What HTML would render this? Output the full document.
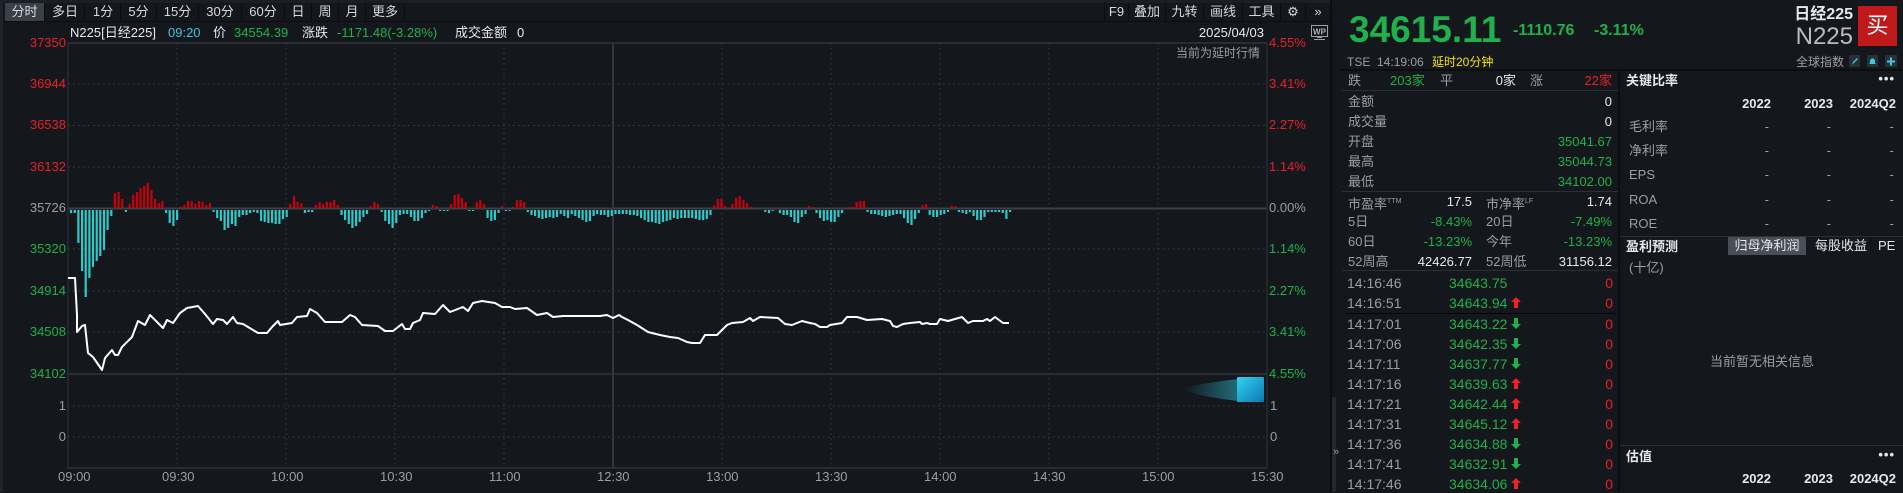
<!DOCTYPE html>
<html><head><meta charset="utf-8">
<style>
*{margin:0;padding:0;box-sizing:border-box}
body{width:1903px;height:492px;background:#14171c;overflow:hidden;position:relative;font-family:"Liberation Sans","Noto Sans CJK SC",sans-serif;color:#c8ccd2;font-size:13px}
.t{position:absolute;white-space:nowrap;line-height:16px}
.r{color:#e8202a}.g{color:#1fb14b}.gy{color:#9a9ea6}.w{color:#e6e8ec}
.tab{position:absolute;top:3px;height:18px;line-height:18px;text-align:center;color:#d6d8dc;font-size:13px;border-right:1px solid #0b0d10}
.ln{position:absolute;background:#2c2f36}
</style></head><body>
<!-- left border -->
<div class="ln" style="left:0;top:0;width:3px;height:492px;background:#202329"></div>
<!-- tab bar -->
<div class="ln" style="left:3px;top:21px;width:1327px;height:1px;background:#0b0d10"></div>
<div class="ln" style="left:3px;top:0;width:1327px;height:3px;background:#1b1e23"></div>
<div class="tab" style="left:5px;width:40px;background:#3b3f47">分时</div>
<div class="tab" style="left:46px;width:39px">多日</div>
<div class="tab" style="left:86px;width:35px">1分</div>
<div class="tab" style="left:121px;width:36px">5分</div>
<div class="tab" style="left:157px;width:42px">15分</div>
<div class="tab" style="left:199px;width:43px">30分</div>
<div class="tab" style="left:242px;width:43px">60分</div>
<div class="tab" style="left:285px;width:27px">日</div>
<div class="tab" style="left:312px;width:27px">周</div>
<div class="tab" style="left:339px;width:27px">月</div>
<div class="tab" style="left:366px;width:39px">更多</div>
<div class="tab" style="left:1104px;width:25px;border-left:1px solid #0b0d10">F9</div>
<div class="tab" style="left:1129px;width:37px">叠加</div>
<div class="tab" style="left:1166px;width:38px">九转</div>
<div class="tab" style="left:1204px;width:39px">画线</div>
<div class="tab" style="left:1243px;width:38px">工具</div>
<div class="tab" style="left:1281px;width:25px">⚙</div>
<div class="tab" style="left:1306px;width:24px;border-right:none">»</div>
<!-- info line -->
<div class="t w" style="left:70px;top:25px">N225[日经225]</div>
<div class="t" style="left:168px;top:25px;color:#3cc8d8">09:20</div>
<div class="t w" style="left:213px;top:25px">价</div>
<div class="t g" style="left:234px;top:25px">34554.39</div>
<div class="t w" style="left:302px;top:25px">涨跌</div>
<div class="t g" style="left:337px;top:25px">-1171.48(-3.28%)</div>
<div class="t w" style="left:455px;top:25px">成交金额</div>
<div class="t w" style="left:517px;top:25px">0</div>
<div class="t w" style="right:639px;top:25px">2025/04/03</div>
<div class="t gy" style="right:643px;top:45px;font-size:12px">当前为延时行情</div>
<!-- chart -->
<svg id="ch" style="position:absolute;left:0;top:0" width="1335" height="492"></svg>
<!-- left axis -->
<div class="t r" style="right:1837px;top:35px">37350</div>
<div class="t r" style="right:1837px;top:76px">36944</div>
<div class="t r" style="right:1837px;top:117px">36538</div>
<div class="t r" style="right:1837px;top:159px">36132</div>
<div class="t gy" style="right:1837px;top:200px">35726</div>
<div class="t g" style="right:1837px;top:241px">35320</div>
<div class="t g" style="right:1837px;top:283px">34914</div>
<div class="t g" style="right:1837px;top:324px">34508</div>
<div class="t g" style="right:1837px;top:366px">34102</div>
<div class="t gy" style="right:1837px;top:398px">1</div>
<div class="t gy" style="right:1837px;top:429px">0</div>
<!-- right axis -->
<div class="t r" style="left:1269px;top:35px">4.55%</div>
<div class="t r" style="left:1269px;top:76px">3.41%</div>
<div class="t r" style="left:1269px;top:117px">2.27%</div>
<div class="t r" style="left:1269px;top:159px">1.14%</div>
<div class="t gy" style="left:1269px;top:200px">0.00%</div>
<div class="t g" style="left:1269px;top:241px">1.14%</div>
<div class="t g" style="left:1269px;top:283px">2.27%</div>
<div class="t g" style="left:1269px;top:324px">3.41%</div>
<div class="t g" style="left:1269px;top:366px">4.55%</div>
<div class="t gy" style="left:1270px;top:398px">1</div>
<div class="t gy" style="left:1270px;top:429px">0</div>
<!-- time axis -->
<div class="t gy" style="left:58px;top:469px">09:00</div>
<div class="t gy" style="left:162px;top:469px">09:30</div>
<div class="t gy" style="left:271px;top:469px">10:00</div>
<div class="t gy" style="left:380px;top:469px">10:30</div>
<div class="t gy" style="left:489px;top:469px">11:00</div>
<div class="t gy" style="left:597px;top:469px">12:30</div>
<div class="t gy" style="left:706px;top:469px">13:00</div>
<div class="t gy" style="left:815px;top:469px">13:30</div>
<div class="t gy" style="left:924px;top:469px">14:00</div>
<div class="t gy" style="left:1033px;top:469px">14:30</div>
<div class="t gy" style="left:1142px;top:469px">15:00</div>
<div class="t gy" style="left:1251px;top:469px">15:30</div>
<!-- separator column -->
<div class="ln" style="left:1330px;top:0;width:2px;height:492px;background:#0b0d10"></div>
<div class="ln" style="left:1332px;top:397px;width:4px;height:95px;background:#24272d"></div>
<div class="t gy" style="left:1333px;top:444px;font-size:11px">»</div>
<svg style="position:absolute;left:1311px;top:25px" width="17" height="16"><rect x="0.5" y="0.5" width="16" height="11" fill="none" stroke="#9aa0a8"/><text x="8.5" y="9.5" font-size="8" font-weight="bold" text-anchor="middle" fill="#b0b4ba" font-family="Liberation Sans">WP</text><rect x="6" y="12" width="5" height="1" fill="#9aa0a8"/><rect x="3" y="14" width="11" height="1" fill="#9aa0a8"/></svg>
<!-- right panel -->
<div class="t g" style="left:1349px;top:10px;font-size:37px;line-height:40px;font-weight:bold">34615.11</div>
<div class="t g" style="left:1513px;top:22px;font-size:16px;line-height:18px;font-weight:bold">-1110.76</div>
<div class="t g" style="left:1594px;top:22px;font-size:16px;line-height:18px;font-weight:bold">-3.11%</div>
<div class="t w" style="right:50px;top:6px;font-size:16px;line-height:18px;font-weight:bold">日经225</div>
<div class="t" style="right:50px;top:24px;font-size:24px;line-height:26px;color:#b8bcc4">N225</div>
<div style="position:absolute;left:1858px;top:6px;width:39px;height:40px;background:#c0191c;color:#fff;font-size:22px;line-height:40px;text-align:center">买</div>
<div class="t gy" style="left:1347px;top:54px;font-size:12px">TSE&nbsp;&nbsp;14:19:06</div>
<div class="t" style="left:1432px;top:54px;font-size:12px;color:#f5e400">延时20分钟</div>
<div class="t gy" style="left:1796px;top:54px;font-size:12px">全球指数</div>
<svg style="position:absolute;left:1849px;top:55px" width="50" height="13"><rect x="0" y="0" width="11" height="12" fill="#2a2e36"/><path d="M3 10 L4 7 L8 3 L9 4 L5 8 Z" fill="#3cc8e0"/><rect x="18" y="0" width="11" height="12" fill="#2a2e36"/><path d="M20 9 L21 8 L21 5 Q23.5 1.5 26 5 L26 8 L27 9 Z" fill="#3cc8e0"/><rect x="36" y="0" width="12" height="12" fill="#2a2e36"/><path d="M41 2.5h2v3h3v2h-3v3h-2v-3h-3v-2h3z" fill="#3cc8e0"/></svg>
<div class="ln" style="left:1340px;top:69px;width:563px;height:2px;background:#0b0d10"></div>
<div class="ln" style="left:1618px;top:71px;width:2px;height:421px;background:#0b0d10"></div>
<!-- left subpanel -->
<div class="t gy" style="left:1348px;top:73px">跌</div>
<div class="t g" style="left:1390px;top:73px">203家</div>
<div class="t gy" style="left:1440px;top:73px">平</div>
<div class="t w" style="right:387px;top:73px">0家</div>
<div class="t gy" style="left:1530px;top:73px">涨</div>
<div class="t r" style="right:291px;top:73px">22家</div>
<div class="ln" style="left:1342px;top:90px;width:276px;height:1px"></div>
<div class="t gy" style="left:1348px;top:94px">金额</div><div class="t w" style="right:291px;top:94px">0</div>
<div class="t gy" style="left:1348px;top:114px">成交量</div><div class="t w" style="right:291px;top:114px">0</div>
<div class="t gy" style="left:1348px;top:134px">开盘</div><div class="t g" style="right:291px;top:134px">35041.67</div>
<div class="t gy" style="left:1348px;top:154px">最高</div><div class="t g" style="right:291px;top:154px">35044.73</div>
<div class="t gy" style="left:1348px;top:174px">最低</div><div class="t g" style="right:291px;top:174px">34102.00</div>
<div class="ln" style="left:1342px;top:191px;width:276px;height:1px"></div>
<div class="t gy" style="left:1348px;top:194px">市盈率<sup style="font-size:7px">TTM</sup></div><div class="t w" style="right:431px;top:194px">17.5</div>
<div class="t gy" style="left:1486px;top:194px">市净率<sup style="font-size:7px">LF</sup></div><div class="t w" style="right:291px;top:194px">1.74</div>
<div class="t gy" style="left:1348px;top:214px">5日</div><div class="t g" style="right:431px;top:214px">-8.43%</div>
<div class="t gy" style="left:1486px;top:214px">20日</div><div class="t g" style="right:291px;top:214px">-7.49%</div>
<div class="t gy" style="left:1348px;top:234px">60日</div><div class="t g" style="right:431px;top:234px">-13.23%</div>
<div class="t gy" style="left:1486px;top:234px">今年</div><div class="t g" style="right:431px;top:234px;right:291px">-13.23%</div>
<div class="t gy" style="left:1348px;top:254px">52周高</div><div class="t w" style="right:431px;top:254px">42426.77</div>
<div class="t gy" style="left:1486px;top:254px">52周低</div><div class="t w" style="right:291px;top:254px">31156.12</div>
<div class="ln" style="left:1342px;top:270px;width:276px;height:1px"></div>
<div class="ln" style="left:1346px;top:313px;width:270px;height:1px;background:#050607"></div>
<div id="ticks"></div>
<!-- right subpanel -->
<div class="t w" style="left:1626px;top:73px;font-weight:bold">关键比率</div>
<div class="t w" style="right:8px;top:71px;font-weight:bold;letter-spacing:1px">•••</div>
<div class="t w" style="right:132px;top:96px;font-weight:bold">2022</div>
<div class="t w" style="right:70px;top:96px;font-weight:bold">2023</div>
<div class="t w" style="right:7px;top:96px;font-weight:bold">2024Q2</div>
<div id="kr"></div>
<div class="ln" style="left:1620px;top:236px;width:283px;height:1px"></div>
<div class="t w" style="left:1626px;top:239px;font-weight:bold">盈利预测</div>
<div style="position:absolute;left:1728px;top:237px;width:78px;height:18px;background:#4a4e57;color:#e6e8ec;line-height:18px;text-align:center">归母净利润</div>
<div class="t w" style="left:1815px;top:238px">每股收益</div>
<div class="ln" style="left:1870px;top:237px;width:1px;height:18px;background:#0b0d10"></div>
<div class="t w" style="left:1878px;top:238px">PE</div>
<div class="t gy" style="left:1629px;top:260px">(十亿)</div>
<div class="t gy" style="left:1710px;top:354px">当前暂无相关信息</div>
<div class="ln" style="left:1620px;top:445px;width:283px;height:1px"></div>
<div class="t w" style="left:1626px;top:449px;font-weight:bold">估值</div>
<div class="t w" style="right:8px;top:447px;font-weight:bold;letter-spacing:1px">•••</div>
<div class="t w" style="right:132px;top:471px;font-weight:bold">2022</div>
<div class="t w" style="right:70px;top:471px;font-weight:bold">2023</div>
<div class="t w" style="right:7px;top:471px;font-weight:bold">2024Q2</div>
<script>
const NS="http://www.w3.org/2000/svg";
const svg=document.getElementById('ch');
let h='';
const L=68,R=1267;
// horizontal dotted grid
[84,125.5,167,249,291,332,406,437].forEach(y=>{h+=`<line x1="${L}" x2="${R}" y1="${y}" y2="${y}" stroke="#3a3e46" stroke-dasharray="1.5 3.5"/>`});
[43,374,468].forEach(y=>{h+=`<line x1="${L}" x2="${R}" y1="${y}" y2="${y}" stroke="#30343b" stroke-width="1.5"/>`});
h+=`<line x1="${L}" x2="${R}" y1="208.5" y2="208.5" stroke="#3c3f46" stroke-width="2"/>`;
for(let i=1;i<11;i++){const x=L+i*109;if(i==5)continue;h+=`<line x1="${x}" x2="${x}" y1="43" y2="468" stroke="#3a3e46" stroke-dasharray="1.5 3.5"/>`;}
h+=`<line x1="613" x2="613" y1="43" y2="468" stroke="#33363d" stroke-width="2"/>`;
h+=`<line x1="${L}" x2="${L}" y1="43" y2="468" stroke="#30343b"/><line x1="${R}" x2="${R}" y1="43" y2="468" stroke="#30343b"/>`;
// bars
const A=[-3,-3,-33,-61,-87,-68,-57,-51,-46,-40,-20,-6,15,16,9,-2,4,13,16,20,22,25,18,9,5,7,-3,-13,-16,-10,1,3,7,7,4,7,6,3,5,-2,-8,-11,-20,-18,-14,-16,-7,-5,-5,-3,-2,-3,-11,-12,-13,-13,-14,-14,-9,-7,4,12,6,5,-3,-2,-2,3,6,4,6,6,8,3,-5,-10,-14,-18,-16,-12,-7,-4,2,6,4,-2,-11,-14,-18,-13,-5,-4,-4,-7,-11,-11,-8,-3,-1,3,2,-1,-1,-1,4,13,14,10,6,-1,-1,6,8,4,-8,-11,-10,-3,2,-1,-1,1,8,8,6,-2,-5,-6,-8,-9,-8,-7,-8,-7,-4,-6,-8,-4,-6,-8,-10,-12,-11,-6,-4,-5,-5,-7,-6,-4,-4,-4,-4,-5];
const B=[-5,-6,-8,-10,-12,-12,-13,-14,-12,-11,-10,-8,-9,-8,-8,-8,-8,-9,-10,-10,-9,-5,3,9,9,2,0,4,10,12,8,5,1,0,0,0,-2,-3,-1,0,-3,-5,-5,-7,-12,-13,-7,-4,2,1,-3,-8,-11,-10,-12,-12,-7,-3,0,1,1,6,7,7,-2,-4,-4,-5,-6,-7,-6,-5,-4,-4,-8,-13,-15,-9,-3,3,4,-5,-7,-7,-5,-4,-2,2,2,-2,-3,-4,-2,-6,-10,-10,-7,-2,-2,-2,-2,-3,-9,-2];
const all=A.concat(B);
const dx=(1009-70)/(all.length-1);
all.forEach((v,i)=>{const x=70+i*dx;if(v>0)h+=`<rect x="${x.toFixed(1)}" y="${208-v}" width="2.2" height="${v}" fill="#c8000c"/>`;else if(v<0)h+=`<rect x="${x.toFixed(1)}" y="210" width="2.2" height="${-v}" fill="#2ec9c9"/>`;});
// price line
const P=[68,278,75,278,77,315,77,332,82,326,85,325,88,353,93,357,102,370,105,358,112,350,115,355,118,355,122,347,132,337,138,321,145,325,150,315,163,328,167,320,173,323,180,313,187,308,198,306,205,314,213,324,217,319,223,320,227,324,233,317,237,323,243,324,258,333,267,333,272,327,278,321,280,325,292,323,297,317,307,316,310,309,317,313,325,322,342,322,350,315,355,317,362,325,378,326,385,331,393,331,402,324,405,329,410,329,413,323,420,320,423,313,435,314,443,305,450,312,463,307,468,311,473,303,482,301,495,303,502,307,510,307,515,309,527,308,537,315,547,313,553,317,563,316,572,316,600,316,607,315,613,318,619,315,622,317,628,320,637,325,648,332,660,335,670,337,678,338,687,342,692,343,700,343,705,335,717,335,727,325,732,323,743,322,750,318,753,321,760,317,778,318,785,324,792,325,802,321,810,323,815,324,820,327,827,327,830,325,842,323,847,317,857,317,867,320,882,319,890,321,893,326,897,327,903,324,910,323,920,322,922,324,927,323,930,324,937,324,940,319,948,321,955,319,962,317,968,323,973,321,983,321,987,319,990,321,995,317,1003,323,1009,323];
let pts=[];for(let i=0;i<P.length;i+=2)pts.push(P[i]+','+P[i+1]);
h+=`<polyline points="${pts.join(' ')}" fill="none" stroke="#fff" stroke-width="2" stroke-linejoin="round"/>`;
// blue cube
h+=`<defs><linearGradient id="tail" x1="0" x2="1"><stop offset="0" stop-color="#2ec9e0" stop-opacity="0"/><stop offset="1" stop-color="#2ec9e0" stop-opacity="0.8"/></linearGradient><linearGradient id="cube" x1="0" y1="0" x2="1" y2="1"><stop offset="0" stop-color="#35d2ee"/><stop offset="1" stop-color="#0a78b4"/></linearGradient></defs>`;
h+=`<path d="M1183 388 Q1210 382 1238 379 L1238 401 Q1210 398 1183 391 Z" fill="url(#tail)" opacity="0.6"/>`;
h+=`<rect x="1237" y="377" width="27" height="25" rx="1" fill="url(#cube)"/>`;
svg.innerHTML=h;
// ticks
const T=[["14:16:46","34643.75",0,283],["14:16:51","34643.94",1,303],["14:17:01","34643.22",-1,324],["14:17:06","34642.35",-1,344],["14:17:11","34637.77",-1,364],["14:17:16","34639.63",1,384],["14:17:21","34642.44",1,404],["14:17:31","34645.12",1,424],["14:17:36","34634.88",-1,444],["14:17:41","34632.91",-1,464],["14:17:46","34634.06",1,484]];
let th='';
T.forEach(r=>{const y=r[3]-9;th+=`<div class="t gy" style="left:1347px;top:${y}px;font-size:14px;line-height:18px">${r[0]}</div><div class="t g" style="left:1449px;top:${y}px;font-size:14px;line-height:18px">${r[1]}</div><div class="t r" style="right:290px;top:${y}px;font-size:14px;line-height:18px">0</div>`;
if(r[2]==1)th+=`<svg style="position:absolute;left:1511px;top:${r[3]-6}px" width="10" height="12"><path d="M5 0 L10 5 L7 5 L7 11 L3 11 L3 5 L0 5 Z" fill="#f0202a"/></svg>`;
if(r[2]==-1)th+=`<svg style="position:absolute;left:1511px;top:${r[3]-6}px" width="10" height="12"><path d="M3 0 L7 0 L7 6 L10 6 L5 11 L0 6 L3 6 Z" fill="#1fb14b"/></svg>`;});
document.getElementById('ticks').innerHTML=th;
let kh='';
[["毛利率",127],["净利率",151],["EPS",175],["ROA",200],["ROE",224]].forEach(r=>{const y=r[1]-8;kh+=`<div class="t gy" style="left:1629px;top:${y}px">${r[0]}</div><div class="t gy" style="right:134px;top:${y}px">-</div><div class="t gy" style="right:72px;top:${y}px">-</div><div class="t gy" style="right:9px;top:${y}px">-</div>`;});
document.getElementById('kr').innerHTML=kh;
</script>
</body></html>
